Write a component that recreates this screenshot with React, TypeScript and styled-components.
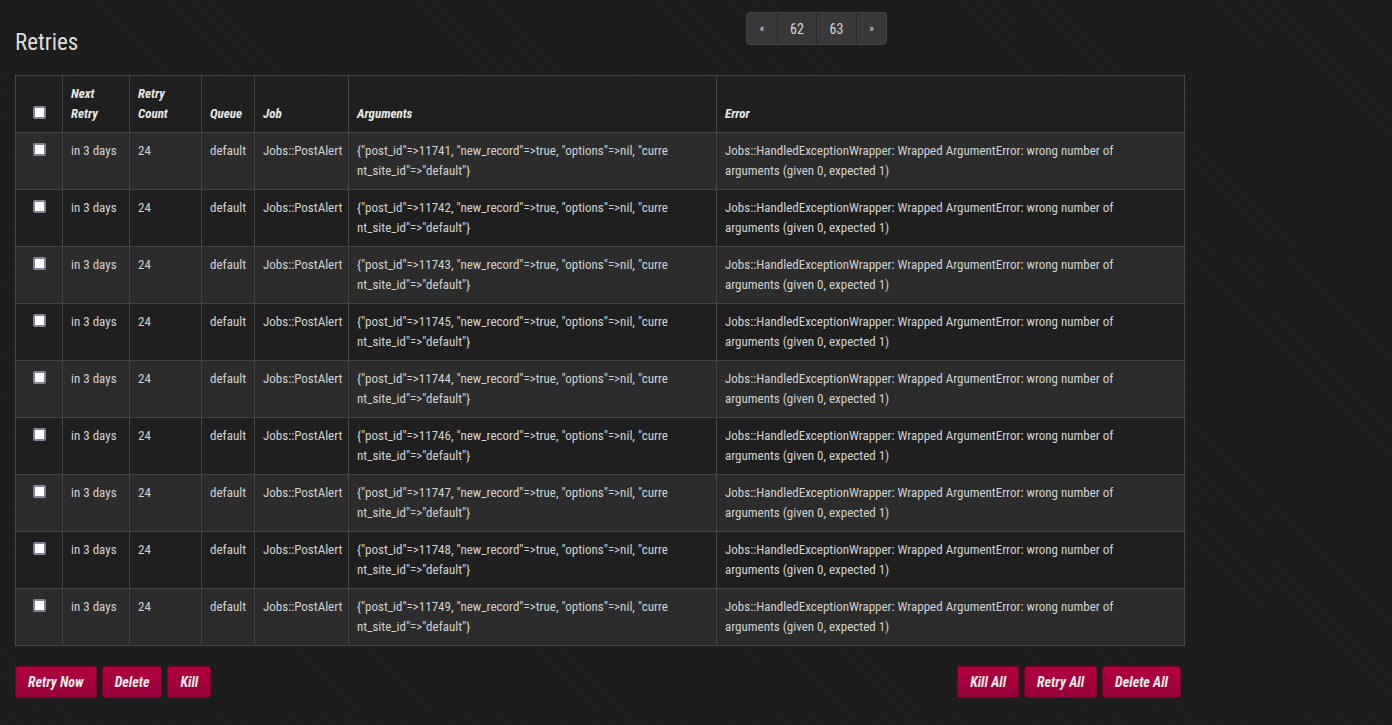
import React from "react";
import styled, { createGlobalStyle } from "styled-components";

const GlobalStyle = createGlobalStyle`
  html, body {
    margin: 0;
    padding: 0;
    background-color: #1c1c1c;
    background-image: repeating-linear-gradient(
      45deg,
      rgba(255, 255, 255, 0.012) 0px,
      rgba(255, 255, 255, 0.012) 1px,
      transparent 1px,
      transparent 3px
    );
    color: #d2d2d2;
    font-family: "Liberation Sans Narrow", "Roboto Condensed", Roboto, sans-serif;
    font-size: 13px;
    line-height: 20px;
  }
`;

const Page = styled.div`
  padding: 12px 15px 20px 15px;
  width: 1170px;
`;

const Header = styled.div`
  display: grid;
  grid-template-columns: 731px 1fr;
  align-items: start;
  height: 63px;
`;

const Title = styled.h3`
  margin: 17px 0 0 0;
  font-size: 23px;
  font-weight: 400;
  line-height: 28px;
  color: #dcdcdc;
`;

const Pager = styled.div`
  display: inline-flex;
  border: 1px solid #444;
  border-radius: 4px;
  overflow: hidden;
  background: #383838;
  width: max-content;
`;

const PageLink = styled.span<{ $w: number; $small?: boolean }>`
  width: ${(p) => p.$w}px;
  height: 31px;
  display: flex;
  align-items: center;
  justify-content: center;
  color: #d8d8d8;
  font-size: ${(p) => (p.$small ? "11px" : "14px")};
  & + & {
    border-left: 1px solid #2a2a2a;
  }
`;

const Table = styled.table`
  width: 1170px;
  border-collapse: collapse;
  table-layout: fixed;
  border: 1px solid #444;
`;

const Th = styled.th`
  text-align: left;
  vertical-align: bottom;
  padding: 8px 8px;
  font-weight: 700;
  font-style: italic;
  color: #e8e8e8;
  background: #1f1f1f;
  border: 1px solid #444;
  line-height: 20px;
`;

const Row = styled.tr<{ $odd: boolean }>`
  background: ${(p) => (p.$odd ? "#2c2c2c" : "#1f1f1f")};
`;

const Td = styled.td`
  vertical-align: top;
  padding: 8px 8px;
  border: 1px solid #444;
  line-height: 20px;
  height: 40px;
`;

const ArgLine = styled.span`
  display: block;
  white-space: nowrap;
`;

const ErrorText = styled.div`
  width: 434px;
`;

const CheckCell = styled.td`
  vertical-align: top;
  text-align: center;
  padding: 8px 8px;
  border: 1px solid #444;
`;

const CheckHead = styled(Th)`
  text-align: center;
`;

const Box = styled.input.attrs({ type: "checkbox" })`
  appearance: none;
  width: 13px;
  height: 13px;
  margin: 2px 0 0 0;
  background: #fff;
  border: 2px solid #85829a;
  border-radius: 2px;
  vertical-align: top;
`;

const Actions = styled.div`
  display: flex;
  justify-content: space-between;
  margin-top: 20px;
  padding-right: 4px;
`;

const Group = styled.div`
  display: flex;
  gap: 5px;
`;

const Button = styled.button`
  height: 32px;
  margin: 0;
  padding: 0 12px;
  border: 1px solid #7a0028;
  border-radius: 3px;
  background: linear-gradient(#b4003f, #95003a);
  color: #ececec;
  font-family: inherit;
  font-size: 14px;
  font-weight: 700;
  font-style: italic;
  cursor: pointer;
`;

const ids = [11741, 11742, 11743, 11745, 11744, 11746, 11747, 11748, 11749];

export default function App() {
  return (
    <>
      <GlobalStyle />
      <Page>
        <Header>
          <Title>Retries</Title>
          <Pager>
            <PageLink $w={30} $small>«</PageLink>
            <PageLink $w={38}>62</PageLink>
            <PageLink $w={39}>63</PageLink>
            <PageLink $w={29} $small>»</PageLink>
          </Pager>
        </Header>
        <Table>
          <colgroup>
            <col style={{ width: 47 }} />
            <col style={{ width: 67 }} />
            <col style={{ width: 72 }} />
            <col style={{ width: 53 }} />
            <col style={{ width: 94 }} />
            <col style={{ width: 368 }} />
            <col />
          </colgroup>
          <thead>
            <tr>
              <CheckHead>
                <Box />
              </CheckHead>
              <Th>Next Retry</Th>
              <Th>Retry Count</Th>
              <Th>Queue</Th>
              <Th>Job</Th>
              <Th>Arguments</Th>
              <Th>Error</Th>
            </tr>
          </thead>
          <tbody>
            {ids.map((id, i) => (
              <Row key={id} $odd={i % 2 === 0}>
                <CheckCell>
                  <Box />
                </CheckCell>
                <Td>in 3 days</Td>
                <Td>24</Td>
                <Td>default</Td>
                <Td>Jobs::PostAlert</Td>
                <Td>
                  <ArgLine>{`{"post_id"=>${id}, "new_record"=>true, "options"=>nil, "curre`}</ArgLine>
                  <ArgLine>{`nt_site_id"=>"default"}`}</ArgLine>
                </Td>
                <Td>
                  <ErrorText>
                    Jobs::HandledExceptionWrapper: Wrapped ArgumentError: wrong number of arguments (given 0, expected 1)
                  </ErrorText>
                </Td>
              </Row>
            ))}
          </tbody>
        </Table>
        <Actions>
          <Group>
            <Button>Retry Now</Button>
            <Button>Delete</Button>
            <Button>Kill</Button>
          </Group>
          <Group>
            <Button>Kill All</Button>
            <Button>Retry All</Button>
            <Button>Delete All</Button>
          </Group>
        </Actions>
      </Page>
    </>
  );
}
